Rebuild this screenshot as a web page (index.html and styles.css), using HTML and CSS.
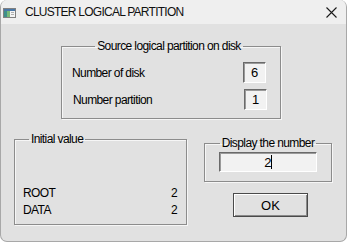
FILE: index.html
```html
<!DOCTYPE html>
<html lang="en">
<head>
    <meta charset="UTF-8">
    <meta name="viewport" content="width=device-width, initial-scale=1.0">
    <title>Cluster Logical Partition</title>
    <link rel="stylesheet" href="styles.css">
</head>
<body>
    <div class="window">
        <div class="titlebar">
            <svg class="app-icon" width="13" height="10" viewBox="0 0 13 10">
                <rect x="0.5" y="0.5" width="12" height="9" fill="#f4f4f4" stroke="#808080"/>
                <rect x="1" y="1" width="11" height="2" fill="#4a78a8"/>
                <rect x="1" y="3" width="6" height="6" fill="#3f8f8a"/>
                <rect x="4" y="3" width="3" height="6" fill="#78b878"/>
                <rect x="8" y="4" width="3" height="1" fill="#b0b0b0"/>
                <rect x="8" y="6" width="3" height="1" fill="#b0b0b0"/>
            </svg>
            <span class="title">CLUSTER LOGICAL PARTITION</span>
            <svg class="close" width="11" height="11" viewBox="0 0 11 11">
                <path d="M0.5 0.5 L10.5 10.5 M10.5 0.5 L0.5 10.5" stroke="#1a1a1a" stroke-width="1.1" fill="none"/>
            </svg>
        </div>

        <div class="client">
            <fieldset class="group source">
                <legend>Source logical partition on disk</legend>
                <div class="field-row">
                    <label for="disk">Number of disk</label>
                    <input class="num-box" type="text" id="disk" value="6" readonly>
                </div>
                <div class="field-row second">
                    <label for="part">Number partition</label>
                    <input class="num-box" type="text" id="part" value="1" readonly>
                </div>
            </fieldset>

            <div class="lower">
                <fieldset class="group initial">
                    <legend>Initial value</legend>
                    <div class="value-row"><span>ROOT</span><span>2</span></div>
                    <div class="value-row"><span>DATA</span><span>2</span></div>
                </fieldset>

                <div class="side">
                    <fieldset class="group display">
                        <legend>Display the number</legend>
                        <div class="display-box">2<span class="caret"></span></div>
                    </fieldset>
                    <button class="ok" type="button">OK</button>
                </div>
            </div>
        </div>
    </div>
</body>
</html>
```

FILE: styles.css
```css
body {
    margin: 0;
    background-color: #ffffff;
    font-family: "Liberation Sans", Arial, sans-serif;
    font-size: 12px;
    letter-spacing: -0.6px;
    color: #000;
}
.window {
    width: 347px;
    height: 242px;
    box-sizing: border-box;
    border: 1px solid #a8a8a8;
    border-top: none;
    border-radius: 7px;
    overflow: hidden;
    background-color: #e1e1e1;
}
.titlebar {
    height: 24px;
    display: flex;
    align-items: center;
    background-color: #efefef;
}
.app-icon {
    margin-left: 2px;
    margin-top: 1px;
}
.title {
    margin-left: 9px;
    font-size: 12px;
    letter-spacing: -0.75px;
    color: #111;
}
.close {
    margin-left: auto;
    margin-right: 9px;
}
.client {
    display: flex;
    flex-direction: column;
}
.group {
    margin: 0;
    padding: 0;
    min-width: 0;
    border: 1px solid #8c8c8c;
    box-shadow: 1px 1px 0 #f6f6f6, inset 1px 1px 0 #f6f6f6;
}
legend {
    padding: 0 2px;
    line-height: 14px;
}
.source legend,
.display legend {
    margin: 0 auto;
}
.initial legend {
    margin-left: 6px;
}
.source {
    margin: 15px 0 0 60px;
    width: 220px;
    box-sizing: border-box;
    padding: 9px 14px 8px 10px;
    display: flex;
    flex-direction: column;
    gap: 6px;
}
.field-row {
    display: flex;
    align-items: center;
    justify-content: space-between;
}
.field-row.second label {
    margin-left: 1px;
}
.field-row.second .num-box {
    margin-right: -1px;
}
.num-box {
    width: 23px;
    height: 21px;
    box-sizing: border-box;
    padding: 0;
    font: inherit;
    font-size: 13px;
    text-align: center;
    background-color: #f2f2f2;
    border: 1px solid;
    border-color: #6a6a6a #ffffff #ffffff #6a6a6a;
    box-shadow: inset 1px 1px 0 #9a9a9a;
    outline: none;
}
.lower {
    display: flex;
    margin: 13px 0 0 13px;
    gap: 17px;
    align-items: flex-start;
}
.initial {
    width: 173px;
    box-sizing: border-box;
    padding: 39px 9px 5px 8px;
}
.value-row {
    display: flex;
    justify-content: space-between;
    line-height: 17px;
}
.side {
    display: flex;
    flex-direction: column;
    margin-top: 4px;
}
.display {
    width: 128px;
    box-sizing: border-box;
    padding: 2px 14px 9px 14px;
}
.display-box {
    height: 20px;
    box-sizing: border-box;
    display: flex;
    align-items: center;
    justify-content: center;
    font-size: 13px;
    background-color: #f2f2f2;
    border: 1px solid;
    border-color: #6a6a6a #ffffff #ffffff #6a6a6a;
    box-shadow: inset 1px 1px 0 #9a9a9a;
}
.caret {
    width: 1px;
    height: 14px;
    background-color: #000;
}
.ok {
    margin: 11px 0 0 29px;
    width: 75px;
    height: 24px;
    padding: 0;
    font: inherit;
    font-size: 13px;
    background-color: #e1e1e1;
    border: 1px solid #4a4a4a;
    box-shadow: inset 1px 1px 0 #ffffff, inset -1px -1px 0 #8a8a8a;
    color: #000;
}
```
